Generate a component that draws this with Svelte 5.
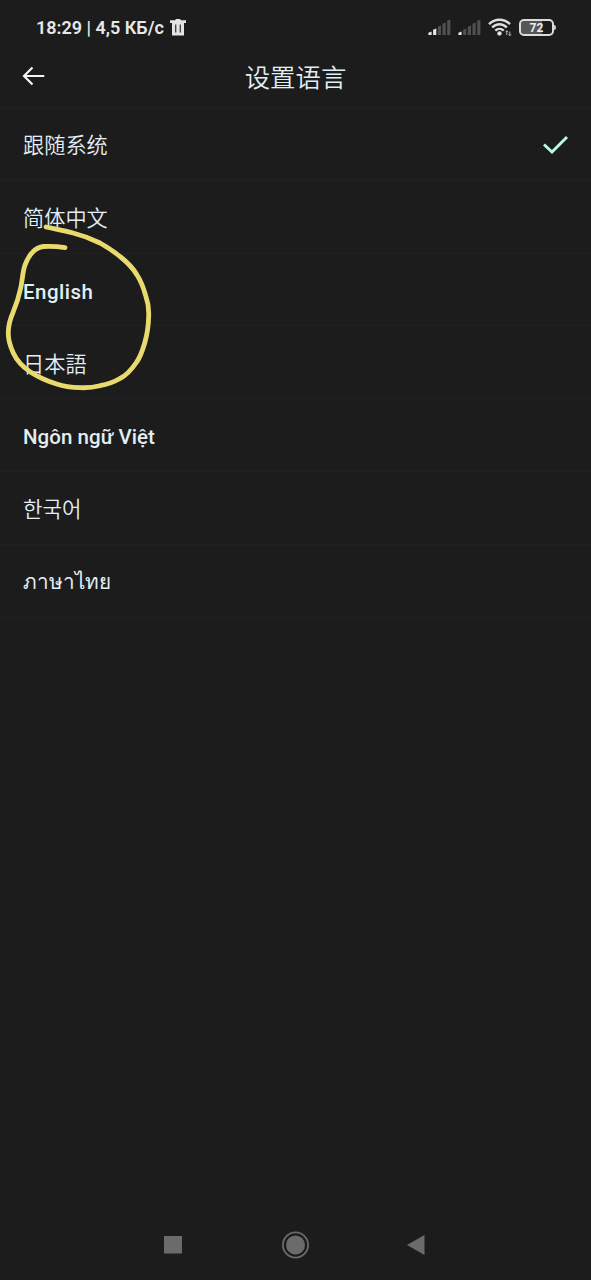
<script>
  const languages = [
    { name: '跟随系统', lang: 'zh-CN', selected: true },
    { name: '简体中文', lang: 'zh-CN' },
    { name: 'English', lang: 'en', style: 'english' },
    { name: '日本語', lang: 'ja' },
    { name: 'Ngôn ngữ Việt', lang: 'vi', style: 'vietnamese' },
    { name: '한국어', lang: 'ko' },
    { name: 'ภาษาไทย', lang: 'th', style: 'thai' }
  ];
  const signals = [2, 1];
</script>

<main class="screen">
  <div class="status">
    <div class="status-left">
      <span class="clock">18:29 | 4,5 КБ/с</span>
      <svg class="trash" width="16" height="17" viewBox="0 0 16 17">
        <path fill="#e4e4e4" fill-rule="evenodd" d="M0 1.2H5L6 0H10L11 1.2H16V4H14V16.5H2V4H0ZM5.2 5.5V13.5H6.3V5.5ZM9.7 5.5V13.5H10.8V5.5Z" />
      </svg>
    </div>
    <div class="status-right">
      {#each signals as strength}
        <svg class="signal" width="23" height="17" viewBox="0 0 23 17">
          {#each [3.5, 6.5, 9.5, 12.5, 15.5] as h, i}
            <path d={`M${i * 4.7 + 0.4} 16V${17.2 - h}L${i * 4.7 + 3.6} ${16 - h}V16Z`} fill={i < strength ? '#e8e8e8' : '#505050'} />
          {/each}
        </svg>
      {/each}
      <svg class="wifi" width="24" height="19" viewBox="0 0 24 19">
        <g fill="none" stroke="#dedede" stroke-width="2.4">
          <path d="M1 6.2C7 .2 16 .2 22 6.2M4.2 9.5C8.4 5.2 14.6 5.2 18.8 9.5M7.3 12.7C9.7 10.3 13.3 10.3 15.7 12.7" />
        </g>
        <circle cx="11.5" cy="15.4" r="2.2" fill="#e4e4e4" />
        <path d="M18.8 17V12.8M17.6 14.2L18.8 12.8L20 14.2M21.8 13.5V17.7M20.6 16.3L21.8 17.7L23 16.3" fill="none" stroke="#c4c4c4" stroke-width=".9" />
      </svg>
      <div class="battery"><span>72</span></div>
    </div>
  </div>

  <header>
    <svg class="back" width="24" height="22" viewBox="0 0 24 22">
      <path d="M22.3 11H2M10.5 2.5L2 11L10.5 19.5" fill="none" stroke="#f5f5f5" stroke-width="2.2" />
    </svg>
    <h1 lang="zh-CN">设置语言</h1>
  </header>

  <ul>
    {#each languages as item}
      <li lang={item.lang}>
        <span class={['name', item.style]}>{item.name}</span>
        {#if item.selected}
          <svg class="check" width="26" height="20" viewBox="0 0 26 20">
            <path d="M1 9.5L9 17L24 2" fill="none" stroke="#b9f8e7" stroke-width="2.9" />
          </svg>
        {/if}
      </li>
    {/each}
  </ul>

  <nav>
    <svg width="18" height="18" viewBox="0 0 18 18"><rect width="18" height="17.5" fill="#6b6b6b" /></svg>
    <svg width="28" height="28" viewBox="0 0 28 28">
      <circle cx="14.5" cy="14" r="12.6" fill="none" stroke="#6b6b6b" stroke-width="1.8" />
      <circle cx="14.5" cy="14" r="9.5" fill="#6b6b6b" />
    </svg>
    <svg width="18" height="20" viewBox="0 0 18 20"><path d="M17.5 0V20L0 10Z" fill="#6b6b6b" /></svg>
  </nav>

  <svg class="scribble" width="160" height="180" viewBox="0 0 160 180">
    <path d="M46 8C55 10 64 11.5 73 14C83 16.5 91 19.5 100 24C107 28 114 32.5 120 37.5C127 43 133 49 137 56C141 62 143.5 69 145.5 76C148 83 149 90 148.7 97C148.5 106 147.5 114 145 123C143 130 141 137 136.7 143C132 150 127 156 120 159.5C114 163 107 165.5 100 166.7C93 168.5 87 169 80 168.7C72 168.5 64 167.5 56.7 165C47 162 38 158 30 152.7C23 148 17 142 13.3 134C10 127 8 120 8.3 113C8.5 106 10.5 99 13.3 92.7C16.5 85 19 77 20.7 69C22.5 61 22.5 53 25 46C27 41 29.5 36 33 32.7C36 29.5 39.5 28 43.5 27.5C51 27 58 27.5 65 28.7" fill="none" stroke="#e9da6e" stroke-width="4.8" stroke-linecap="round" stroke-linejoin="round" />
  </svg>
</main>

<style>
  :global(body) {
    margin: 0;
    background: #1c1c1c;
  }
  .screen {
    position: relative;
    display: flex;
    flex-direction: column;
    box-sizing: border-box;
    width: 591px;
    height: 1280px;
    overflow: hidden;
    background: #1c1c1c;
    color: #e1eef5;
    font-family: Roboto, "Noto Sans CJK SC", sans-serif;
  }
  svg {
    display: block;
    flex: none;
  }
  .status {
    display: flex;
    align-items: center;
    justify-content: space-between;
    height: 54px;
    padding: 0 34px 0 36px;
    box-sizing: border-box;
  }
  .status-left {
    display: flex;
    align-items: center;
    gap: 6px;
  }
  .clock {
    font-size: 18px;
    font-weight: 600;
    line-height: 22px;
    color: #e8e8e8;
    white-space: nowrap;
    padding-top: 2px;
  }
  .status-right {
    display: flex;
    align-items: center;
  }
  .signal {
    margin-right: 7px;
  }
  .wifi {
    margin-right: 7px;
  }
  .battery {
    position: relative;
    width: 35px;
    height: 17px;
    box-sizing: border-box;
    border: 2px solid #dcdcdc;
    border-radius: 5px;
    background: linear-gradient(90deg, #565656 0 68%, #1c1c1c 68%);
    background-clip: padding-box;
    margin-right: 3px;
  }
  .battery::after {
    content: "";
    position: absolute;
    right: -4px;
    top: 4px;
    width: 2px;
    height: 5px;
    background: #c8c8c8;
    border-radius: 0 2px 2px 0;
  }
  .battery span {
    display: block;
    color: #eee;
    font-size: 12px;
    font-weight: 700;
    line-height: 14px;
    text-align: center;
  }
  header {
    display: grid;
    grid-template-columns: 24px 1fr 24px;
    align-items: center;
    height: 54px;
    padding: 0 22px;
    box-sizing: border-box;
    border-bottom: 1px solid #202020;
  }
  .back {
    margin-bottom: 9px;
  }
  h1 {
    margin: 0 0 5px;
    font-size: 25.4px;
    line-height: 38px;
    font-weight: 350;
    text-align: center;
  }
  ul {
    list-style: none;
    margin: 0;
    padding: 0;
  }
  li {
    display: flex;
    align-items: center;
    justify-content: space-between;
    height: 72.8px;
    padding: 2px 22px 0 23px;
    box-sizing: border-box;
    border-bottom: 1px solid #202020;
  }
  .name {
    font-size: 21.2px;
    font-weight: 350;
    line-height: 32px;
    padding-top: 3px;
  }
  .english,
  .vietnamese {
    font-size: 20.5px;
    font-weight: 500;
  }
  .english {
    letter-spacing: 0.5px;
  }
  .vietnamese {
    letter-spacing: 0.05px;
    padding-top: 1px;
  }
  .thai {
    font-size: 20.7px;
    padding-top: 1px;
  }
  nav {
    display: flex;
    align-items: center;
    justify-content: space-between;
    height: 71px;
    margin-top: auto;
    padding: 0 166px 0 164px;
    box-sizing: border-box;
  }
  .scribble {
    position: absolute;
    left: 0;
    top: 219px;
  }
</style>
